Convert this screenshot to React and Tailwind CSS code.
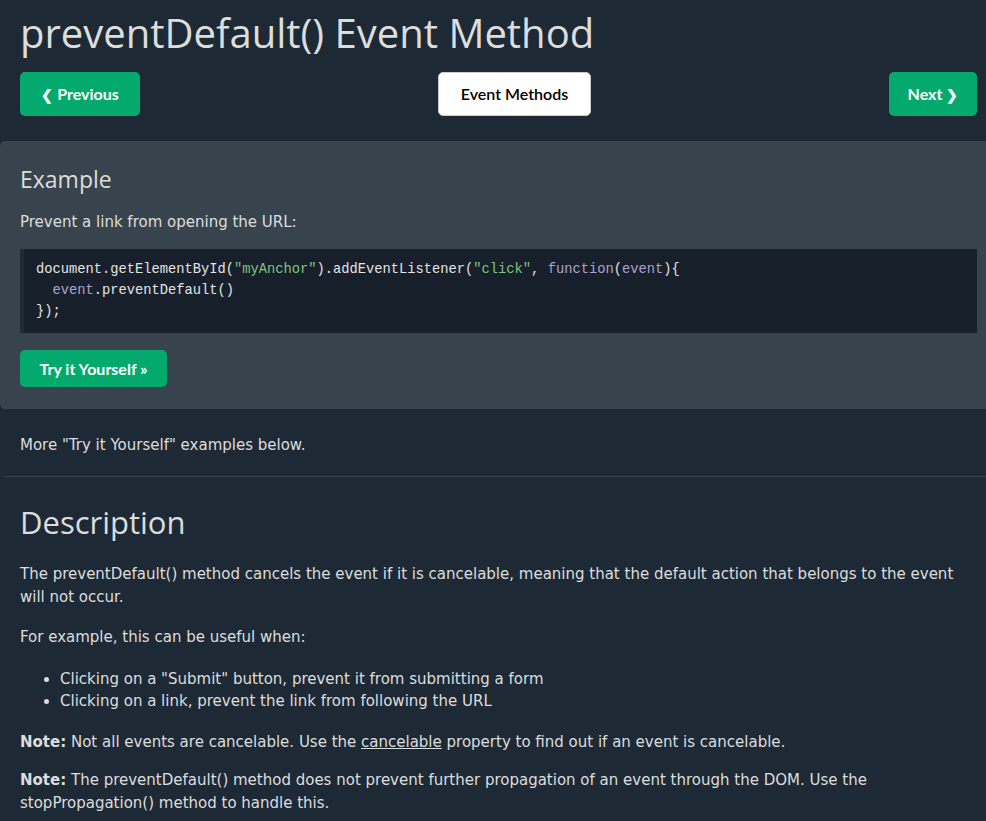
import React from "react";

const Btn = ({ children, className = "" }) => (
  <a
    href="#"
    className={`inline-flex items-center justify-center rounded-[5px] font-bold text-[16px] ${className}`}
    style={{ fontFamily: "Lato, 'Open Sans', sans-serif" }}
  >
    {children}
  </a>
);

const App = () => {
  const body = { fontFamily: "Verdana, 'DejaVu Sans', sans-serif" };
  const head = { fontFamily: "'Open Sans', 'Noto Sans', sans-serif" };
  const mono = { fontFamily: "Consolas, 'Liberation Mono', monospace" };

  return (
    <div className="min-h-screen bg-[#1d2a35] text-[#dddddd] overflow-hidden" style={body}>
      <div className="pl-5 pr-[9px] pt-[5px]">
        <h1 className="text-[40px] leading-[56px] text-[#dddddd] font-normal" style={head}>
          preventDefault() Event Method
        </h1>
        <div className="flex items-center justify-between mt-[11px]">
          <Btn className="h-[44px] w-[120px] bg-[#04aa6d] text-white gap-1">
            <span className="text-[14px]">❮</span> Previous
          </Btn>
          <Btn className="h-[44px] w-[153px] bg-white text-black border border-[#cccccc] font-semibold">
            Event Methods
          </Btn>
          <Btn className="h-[44px] w-[88px] bg-[#04aa6d] text-white gap-1">
            Next <span className="text-[14px]">❯</span>
          </Btn>
        </div>
      </div>

      <div className="mt-[25px] bg-[#38444d] rounded-l-[5px] pl-5 pr-[9px] pt-[20px] pb-[22px]">
        <h2 className="text-[23px] leading-[36px] font-normal" style={head}>
          Example
        </h2>
        <p className="text-[15px] leading-[24px] mt-[13px]">Prevent a link from opening the URL:</p>
        <div
          className="mt-[15px] bg-[#17202a] border-l-4 border-[#1f2a33] pl-3 pt-[10px] pb-[11px] text-[13.75px] leading-[21px] whitespace-pre text-[#e4e4e4]"
          style={mono}
        >
          <div>
            document.getElementById(<span className="text-[#7fc47f]">"myAnchor"</span>).addEventListener(
            <span className="text-[#7fc47f]">"click"</span>, <span className="text-[#b0a0d0]">function</span>(
            <span className="text-[#b0a0d0]">event</span>){"{"}
          </div>
          <div>
            {"  "}
            <span className="text-[#b0a0d0]">event</span>.preventDefault()
          </div>
          <div>{"});"}</div>
        </div>
        <Btn className="mt-[17px] h-[37px] w-[147px] bg-[#04aa6d] text-white text-[15px]">
          Try it Yourself »
        </Btn>
      </div>

      <div className="pl-5 pr-[9px]">
        <p className="text-[15px] leading-[24px] mt-[24px]">More "Try it Yourself" examples below.</p>
      </div>
      <hr className="ml-[4px] mt-[19px] border-0 border-t border-[#38444d]" />

      <div className="pl-5 pr-[9px]">
        <h2 className="text-[31px] leading-[44px] mt-[23px] font-normal" style={head}>
          Description
        </h2>
        <p className="text-[15px] leading-[23px] mt-[19px]">
          The preventDefault() method cancels the event if it is cancelable, meaning that the default action that
          belongs to the event will not occur.
        </p>
        <p className="text-[15px] leading-[23px] mt-[17px]">For example, this can be useful when:</p>
        <ul className="list-disc pl-10 text-[15px] leading-[22px] mt-[19px]">
          <li>Clicking on a "Submit" button, prevent it from submitting a form</li>
          <li>Clicking on a link, prevent the link from following the URL</li>
        </ul>
        <p className="text-[15px] leading-[23px] mt-[19px]">
          <b>Note:</b> Not all events are cancelable. Use the <a href="#" className="underline">cancelable</a>{" "}
          property to find out if an event is cancelable.
        </p>
        <p className="text-[15px] leading-[23px] mt-[15px]">
          <b>Note:</b> The preventDefault() method does not prevent further propagation of an event through the DOM.
          Use the stopPropagation() method to handle this.
        </p>
      </div>
    </div>
  );
};

export default App;
